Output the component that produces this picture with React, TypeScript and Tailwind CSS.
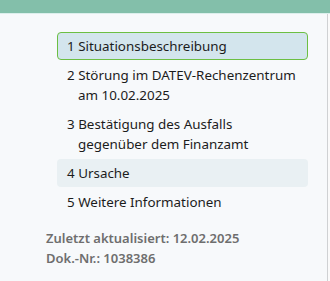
const items = [
  { n: 1, text: "Situationsbeschreibung", active: true },
  { n: 2, text: "Störung im DATEV-Rechenzentrum am 10.02.2025" },
  { n: 3, text: "Bestätigung des Ausfalls gegenüber dem Finanzamt" },
  { n: 4, text: "Ursache", hover: true },
  { n: 5, text: "Weitere Informationen" },
];

export default function App() {
  return (
    <div
      className="w-[330px] h-[281px] overflow-hidden bg-[#f9fafb]"
      style={{ fontFamily: '"Noto Sans", "Open Sans", sans-serif' }}
    >
      <div className="h-[13px] bg-[#83bfaa] border-b border-[#dcefec] box-content" />
      <div className="flex h-full">
        <div className="w-[328px] border-r border-[#cfd1d3] bg-[#f7f9fb] pl-[46px] pt-[18px]">
          <nav className="ml-[11px] w-[251px] flex flex-col gap-px">
            {items.map((it) => (
              <div
                key={it.n}
                className={
                  "rounded-[4px] border pl-[20px] -indent-[11px] pr-1 py-[3px] text-[13.4px] leading-[20px] text-[#1c1c1c] " +
                  (it.active
                    ? "border-[#6cbf43] bg-[#d3e5ed]"
                    : it.hover
                    ? "border-transparent bg-[#e9f0f3]"
                    : "border-transparent")
                }
              >
                {it.n} {it.text}
              </div>
            ))}
          </nav>
          <div className="mt-[12px] text-[13px] leading-[20px] font-semibold text-[#6e6e6e]">
            <div>Zuletzt aktualisiert: 12.02.2025</div>
            <div>Dok.-Nr.: 1038386</div>
          </div>
        </div>
        <div className="flex-1 bg-[#fafafa]" />
      </div>
    </div>
  );
}
